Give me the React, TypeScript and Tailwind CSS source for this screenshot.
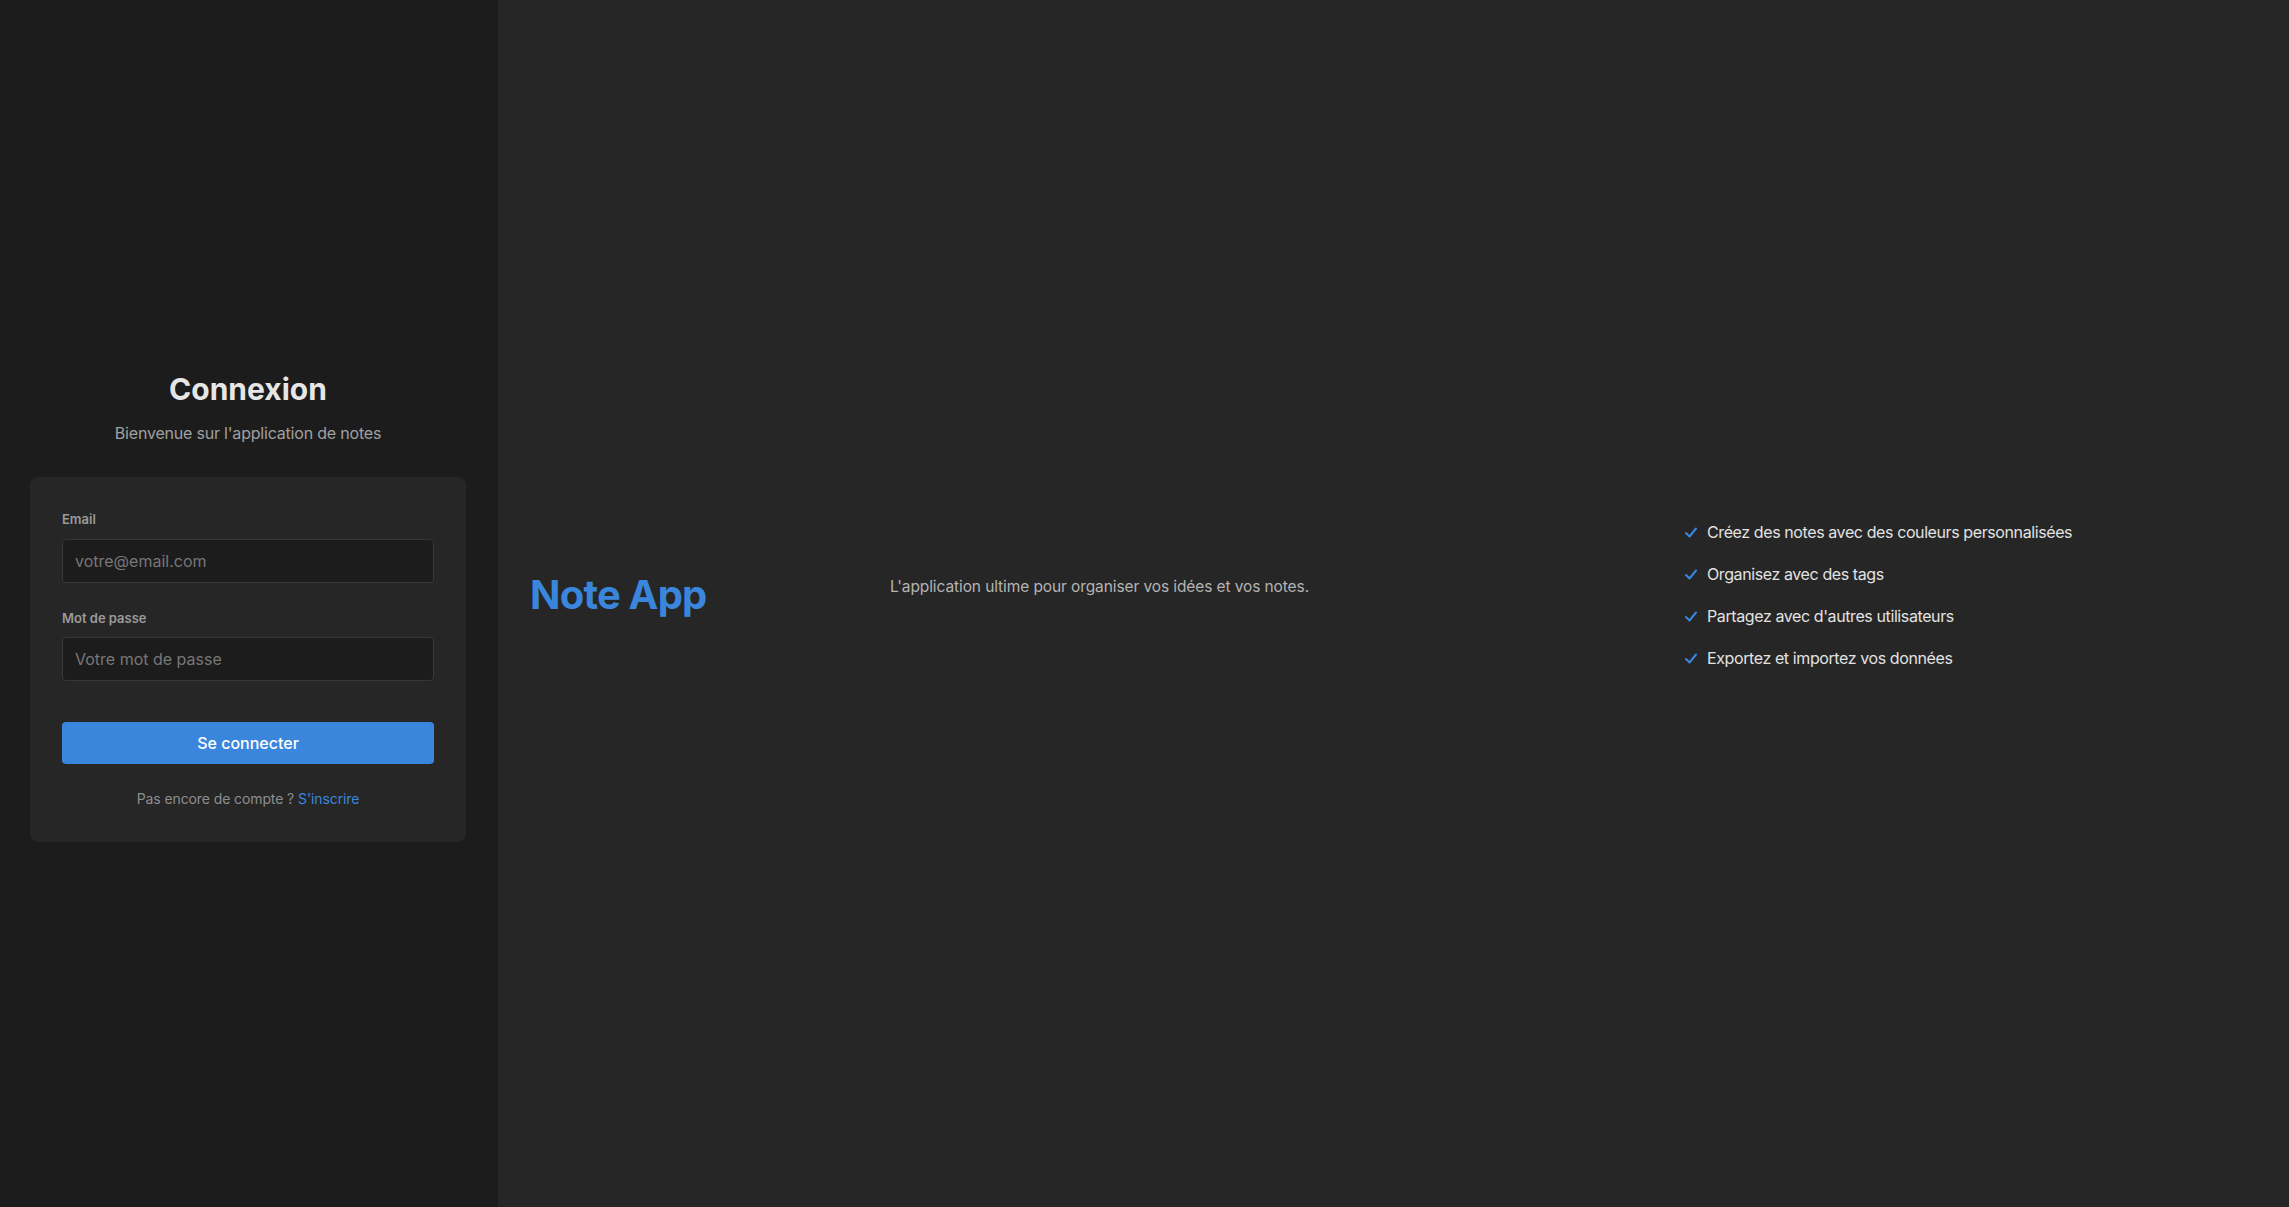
import React from 'react'

const features = [
  'Créez des notes avec des couleurs personnalisées',
  'Organisez avec des tags',
  "Partagez avec d'autres utilisateurs",
  'Exportez et importez vos données',
]

function Check() {
  return (
    <svg width="12" height="11" viewBox="0 0 12 11" fill="none" className="shrink-0">
      <path d="M1 6 L4.5 9.5 L11 1.5" stroke="#3a86dd" strokeWidth="2" strokeLinecap="round" strokeLinejoin="round" />
    </svg>
  )
}

function LoginPanel() {
  return (
    <div className="flex w-[498px] shrink-0 flex-col justify-center bg-[#1c1c1c] pt-[5px] pr-[32px] pl-[30px]">
      <h2 className="text-center text-[30px] font-bold leading-9 text-[#e6e6e6]">Connexion</h2>
      <p className="mt-[14px] text-center text-[16px] tracking-[-0.2px] text-[#a0a0a0]">Bienvenue sur l'application de notes</p>

      <form className="mt-[32px] rounded-lg bg-[#262626] px-8 pt-8 pb-[33px]" onSubmit={e => e.preventDefault()}>
        <label className="block text-[13px] font-semibold leading-5 text-[#9a9a9a]">Email</label>
        <input
          type="email"
          placeholder="votre@email.com"
          className="mt-[10px] block h-[44px] w-full rounded border border-[#383838] bg-[#1c1c1c] px-3 text-[16px] text-[#ddd] outline-none placeholder:text-[#777]"
        />
        <label className="mt-[25px] block text-[13px] font-semibold leading-5 text-[#9a9a9a]">Mot de passe</label>
        <input
          type="password"
          placeholder="Votre mot de passe"
          className="mt-[9px] block h-[44px] w-full rounded border border-[#383838] bg-[#1c1c1c] px-3 text-[16px] text-[#ddd] outline-none placeholder:text-[#777]"
        />
        <button
          type="submit"
          className="mt-[41px] block h-[42px] w-full rounded bg-[#3a86dd] text-[16px] font-medium text-white"
        >
          Se connecter
        </button>
        <p className="mt-[25px] text-center text-[14px] leading-5 tracking-[-0.1px] text-[#8e8e8e]">
          Pas encore de compte ? <a href="#" className="text-[#3a86dd]">S'inscrire</a>
        </p>
      </form>
    </div>
  )
}

export default function App() {
  return (
    <div className="flex h-[1207px] w-full overflow-hidden bg-[#262626] font-['Inter',sans-serif]">
      <LoginPanel />
      <main className="flex flex-1 items-center pb-[17px] pl-8">
        <h1 className="w-[360px] shrink-0 text-[40px] font-bold leading-[48px] tracking-[-0.8px] text-[#3a86dd]">Note App</h1>
        <p className="w-[795px] shrink-0 pb-4 text-[15.5px] tracking-[-0.1px] text-[#b4b4b4]">
          L'application ultime pour organiser vos idées et vos notes.
        </p>
        <ul className="flex flex-col gap-[18px]">
          {features.map(f => (
            <li key={f} className="flex items-center gap-[10px] text-[16px] leading-6 tracking-[-0.4px] text-[#e2e2e2]">
              <Check />
              {f}
            </li>
          ))}
        </ul>
      </main>
    </div>
  )
}
